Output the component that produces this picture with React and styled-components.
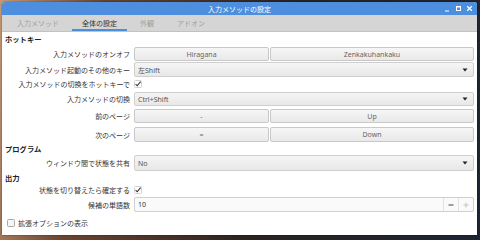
import React from "react";
import styled, { createGlobalStyle } from "styled-components";

const Global = createGlobalStyle`
  html, body { margin: 0; padding: 0; }
  body {
    width: 480px; height: 240px; overflow: hidden;
    background: linear-gradient(100deg, #c99a74 0%, #6b4430 20%, #2a2320 55%, #1d2535 100%);
    font-family: "Noto Sans", "Noto Sans CJK JP", sans-serif;
  }
`;

const Window = styled.div`
  margin: 2px 3px 0 2px;
  width: 475px;
  height: 233px;
  background: #fff;
  border-radius: 3px 3px 0 0;
  overflow: hidden;
  display: flex;
  flex-direction: column;
  box-shadow: 0 0 2px rgba(0,0,0,0.5);
`;

const TitleBar = styled.div`
  height: 13px;
  background: #4d8fde;
  display: flex;
  align-items: center;
  justify-content: center;
  position: relative;
  color: #fff;
  font-size: 7px;
  font-family: "Noto Sans CJK JP", sans-serif;
`;

const Controls = styled.div`
  position: absolute;
  right: 4px;
  top: 0;
  height: 13px;
  display: flex;
  align-items: center;
  gap: 4px;
`;

const TabBar = styled.div`
  height: 16px;
  background: #d5d5d5;
  border-bottom: 1px solid #c2c2c2;
  display: flex;
  align-items: stretch;
  padding-left: 5px;
  gap: 3px;
`;

const Tab = styled.div`
  padding: 0 10px;
  display: flex;
  align-items: center;
  font-size: 7px;
  font-family: "Noto Sans CJK JP", sans-serif;
  color: ${p => (p.$active ? "#333" : "#a0a0a0")};
  border-bottom: 2px solid ${p => (p.$active ? "#4a90d9" : "transparent")};
  padding-top: 2px;
`;

const Content = styled.div`
  display: flex;
  flex-direction: column;
  padding: 0 3px 0 3px;
`;

const Header = styled.div`
  height: ${p => p.$h}px;
  display: flex;
  align-items: center;
  font-size: 7.3px;
  font-weight: bold;
  color: #222;
  font-family: "Noto Sans CJK JP", sans-serif;
`;

const Row = styled.div`
  display: grid;
  grid-template-columns: 125px 1fr;
  column-gap: 4px;
  height: ${p => p.$h}px;
  margin-top: ${p => p.$mt || 0}px;
  align-items: stretch;
`;

const Label = styled.div`
  display: flex;
  align-items: center;
  justify-content: flex-end;
  font-size: 7px;
  color: #333;
  font-family: "Noto Sans CJK JP", sans-serif;
  white-space: nowrap;
`;

const ButtonPair = styled.div`
  display: grid;
  grid-template-columns: 135px 1fr;
  gap: 1px;
`;

const Button = styled.div`
  display: flex;
  align-items: center;
  justify-content: center;
  border: 1px solid #c8c8c8;
  border-radius: 2px;
  background: linear-gradient(#f6f6f6, #e9e9e9);
  color: #666;
  font-size: 7px;
`;

const Combo = styled.div`
  display: flex;
  align-items: center;
  justify-content: space-between;
  border: 1px solid #cfcfcf;
  border-radius: 2px;
  background: linear-gradient(#f5f5f5, #e8e8e8);
  color: #555;
  font-size: 7px;
  padding: 0 5px 0 3px;
  font-family: "Noto Sans", "Noto Sans CJK JP", sans-serif;
`;

const CheckCell = styled.div`
  display: flex;
  align-items: center;
`;

const Spin = styled.div`
  display: flex;
  align-items: stretch;
  border: 1px solid #cfcfcf;
  border-radius: 2px;
  background: #fafafa;
`;

const SpinValue = styled.div`
  flex: 1;
  display: flex;
  align-items: center;
  padding-left: 3px;
  font-size: 7px;
  color: #333;
`;

const SpinBtn = styled.div`
  width: 14px;
  border-left: 1px solid #e2e2e2;
  display: flex;
  align-items: center;
  justify-content: center;
`;

const Footer = styled.div`
  display: flex;
  align-items: center;
  gap: 3px;
  height: 14px;
  margin-top: 4px;
  padding-left: 2px;
  font-size: 7px;
  color: #333;
  font-family: "Noto Sans CJK JP", sans-serif;
`;

const Arrow = () => (
  <svg width="6" height="4" viewBox="0 0 6 4"><path d="M0.5 0.5h5L3 3.5z" fill="#222" /></svg>
);

const Check = () => (
  <svg width="8" height="8" viewBox="0 0 8 8">
    <rect x="0.5" y="0.5" width="7" height="7" rx="1" fill="#fff" stroke="#d0d0d0" />
    <path d="M1.6 4.2 L3.2 5.8 L6.6 1.6" fill="none" stroke="#333" strokeWidth="1.1" />
  </svg>
);

const EmptyBox = () => (
  <svg width="8" height="8" viewBox="0 0 8 8">
    <rect x="0.5" y="0.5" width="7" height="7" rx="1" fill="#f6f6f6" stroke="#a8a8a8" />
  </svg>
);

const Minus = ({ c }) => (
  <svg width="6" height="6" viewBox="0 0 6 6"><path d="M0.5 3h5" stroke={c} strokeWidth="1.2" /></svg>
);
const Plus = ({ c }) => (
  <svg width="6" height="6" viewBox="0 0 6 6"><path d="M0.5 3h5M3 0.5v5" stroke={c} strokeWidth="1" /></svg>
);

export default function App() {
  return (
    <>
      <Global />
      <Window>
        <TitleBar>
          入力メソッドの設定
          <Controls>
            <svg width="7" height="7" viewBox="0 0 7 7"><path d="M1 6h4" stroke="#fff" strokeWidth="1.2" /></svg>
            <svg width="7" height="7" viewBox="0 0 7 7"><rect x="1.5" y="1.5" width="4" height="4" fill="none" stroke="#fff" strokeWidth="1" /><path d="M1.5 2h4" stroke="#fff" strokeWidth="1.2" /></svg>
            <svg width="7" height="7" viewBox="0 0 7 7"><path d="M1.2 1.2l4.6 4.6M5.8 1.2l-4.6 4.6" stroke="#fff" strokeWidth="1.3" /></svg>
          </Controls>
        </TitleBar>
        <TabBar>
          <Tab>入力メソッド</Tab>
          <Tab $active>全体の設定</Tab>
          <Tab>外観</Tab>
          <Tab>アドオン</Tab>
        </TabBar>
        <Content>
          <Header $h={14}>ホットキー</Header>
          <Row $h={14} $mt={1}>
            <Label>入力メソッドのオンオフ</Label>
            <ButtonPair>
              <Button>Hiragana</Button>
              <Button>Zenkakuhankaku</Button>
            </ButtonPair>
          </Row>
          <Row $h={15} $mt={1}>
            <Label>入力メソッド起動のその他のキー</Label>
            <Combo><span>左Shift</span><Arrow /></Combo>
          </Row>
          <Row $h={13}>
            <Label>入力メソッドの切換をホットキーで</Label>
            <CheckCell><Check /></CheckCell>
          </Row>
          <Row $h={14} $mt={2}>
            <Label>入力メソッドの切換</Label>
            <Combo><span>Ctrl+Shift</span><Arrow /></Combo>
          </Row>
          <Row $h={14} $mt={3}>
            <Label>前のページ</Label>
            <ButtonPair>
              <Button>-</Button>
              <Button>Up</Button>
            </ButtonPair>
          </Row>
          <Row $h={15} $mt={4}>
            <Label>次のページ</Label>
            <ButtonPair>
              <Button>=</Button>
              <Button>Down</Button>
            </ButtonPair>
          </Row>
          <Header $h={13}>プログラム</Header>
          <Row $h={16}>
            <Label>ウィンドウ間で状態を共有</Label>
            <Combo><span>No</span><Arrow /></Combo>
          </Row>
          <Header $h={13}>出力</Header>
          <Row $h={12}>
            <Label>状態を切り替えたら確定する</Label>
            <CheckCell><Check /></CheckCell>
          </Row>
          <Row $h={15} $mt={1}>
            <Label>候補の単語数</Label>
            <Spin>
              <SpinValue>10</SpinValue>
              <SpinBtn><Minus c="#444" /></SpinBtn>
              <SpinBtn><Plus c="#c4c4c4" /></SpinBtn>
            </Spin>
          </Row>
          <Footer><EmptyBox />拡張オプションの表示</Footer>
        </Content>
      </Window>
    </>
  );
}
